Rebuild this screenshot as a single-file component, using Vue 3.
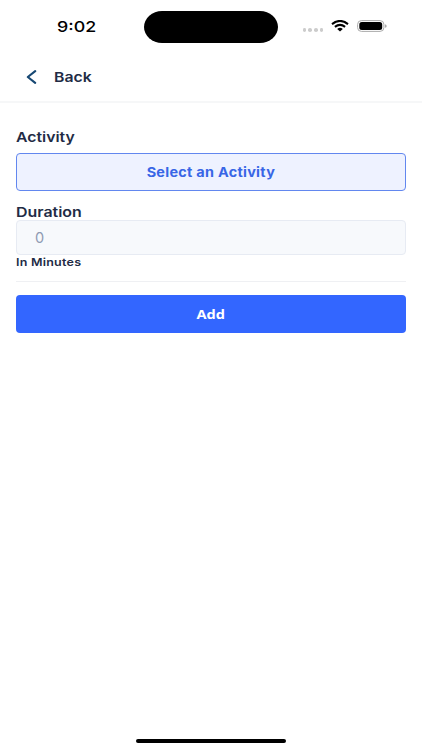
<script setup>
import { ref } from 'vue'

const duration = ref('')
</script>

<template>
  <main class="screen">
    <header class="status">
      <span class="time"><span class="wide">9:02</span></span>
      <div class="island"></div>
      <div class="indicators">
        <div class="signal"><i></i><i></i><i></i><i></i></div>
        <svg class="wifi" width="18" height="12" viewBox="0 0 18 12">
          <path d="M1 4.1Q9-2.3 17 4.1M3.9 6.9Q9 2.9 14.1 6.9" fill="none" stroke="#000" stroke-width="2" />
          <path d="M6.2 9Q9 6.7 11.8 9L9 11.5Z" />
        </svg>
        <svg class="battery" width="30" height="12" viewBox="0 0 30 12">
          <rect x=".6" y=".6" width="26.3" height="10.8" rx="3.8" fill="#fff" stroke="#aaa" />
          <rect x="2.3" y="2.1" width="22.9" height="7.8" rx="2.5" />
          <path d="M28.2 4.2Q29.6 4.6 29.6 6T28.2 7.8Z" fill="#999" />
        </svg>
      </div>
    </header>

    <nav class="nav">
      <svg width="12" height="14" viewBox="0 0 12 14">
        <path d="M9.2 1.2L1.8 7L9.2 12.8" fill="none" stroke="#174873" stroke-width="2.1" stroke-linecap="round" stroke-linejoin="round" />
      </svg>
      <span class="back"><span class="wide">Back</span></span>
    </nav>

    <form class="form" @submit.prevent>
      <label class="label activity-label"><span class="wide">Activity</span></label>
      <button type="button" class="select"><span class="wide">Select an Activity</span></button>
      <label class="label duration-label" for="duration"><span class="wide">Duration</span></label>
      <input id="duration" v-model="duration" class="field" inputmode="numeric" placeholder="0">
      <span class="hint"><span class="wide">In Minutes</span></span>
      <hr>
      <button type="submit" class="add"><span class="wide">Add</span></button>
    </form>
    <div class="home"></div>
  </main>
</template>

<style>
body { margin: 0; background: #fff; }
</style>

<style scoped>
* { box-sizing: border-box; }
.screen {
  width: 422px;
  height: 750px;
  overflow: hidden;
  display: flex;
  flex-direction: column;
  background: #fff;
  color: #222b45;
  font-family: Inter, sans-serif;
  font-weight: 600;
}
.wide {
  display: inline-block;
  transform-origin: left center;
  white-space: nowrap;
}
.status {
  height: 53px;
  display: flex;
  align-items: flex-start;
  flex-shrink: 0;
}
.time { width: 144px; padding: 17px 0 0 57px; font-size: 15px; font-weight: 550; line-height: 20px; color: #000; }
.time .wide { transform: scaleX(1.19); }
.island { width: 134px; height: 32px; margin-top: 10.5px; border-radius: 18px / 16px; background: #000; }
.indicators { display: flex; align-items: center; height: 12px; margin: 20px 0 0 24.5px; }
.signal { display: flex; gap: 1.9px; margin: 8px 7.5px 0 0; }
.signal i { width: 3.8px; height: 3.6px; border-radius: 50%; background: #ccc; }
.wifi { margin-right: 8px; }
.nav {
  height: 50px;
  flex-shrink: 0;
  display: flex;
  align-items: center;
  padding-left: 26px;
  border-bottom: 2px solid #f6f7f8;
}
.back { margin-left: 16px; font-size: 13.5px; line-height: 20px; }
.back .wide { transform: scaleX(1.17); }
.form { display: flex; flex-direction: column; padding: 25px 16px 0; }
.label { font-size: 13.5px; line-height: 18px; }
.label .wide { transform: scaleX(1.17); }
.activity-label { height: 25px; }
.duration-label { height: 17px; margin-top: 12px; }
.duration-label .wide { transform: translateY(.4px) scaleX(1.18); }
button {
  height: 38px;
  padding: 0;
  border-radius: 4px;
  font: 700 13px/18px Inter, sans-serif;
}
button .wide { transform-origin: center; }
.select { border: 1px solid #6287ef; background: #eef2ff; color: #3866e6; font-weight: 650; letter-spacing: .25px; }
.select .wide { transform: translateY(.4px) scaleX(1.11); }
.field {
  width: 100%;
  height: 35px;
  padding: 0 18px;
  border: 1px solid #e7ebf3;
  border-radius: 4px;
  outline: 0;
  background: #f7f9fc;
  font: 400 14.5px/18px Inter, sans-serif;
}
.field::placeholder { color: #8f9bb3; opacity: 1; }
.hint { height: 26px; font-size: 10.5px; line-height: 14px; }
.hint .wide { letter-spacing: .2px; transform: translateY(1px) scaleX(1.19); }
hr { width: 100%; height: 1px; margin: 0 0 13px; border: 0; background: #eff0f3; }
.add { border: 0; background: #3366ff; color: #fff; font-family: "Open Sans", sans-serif; }
.add .wide { transform: scaleX(1.12); }
.home { width: 150px; height: 4px; margin: auto auto 7.5px 136px; border-radius: 2px; background: #000; }
</style>
